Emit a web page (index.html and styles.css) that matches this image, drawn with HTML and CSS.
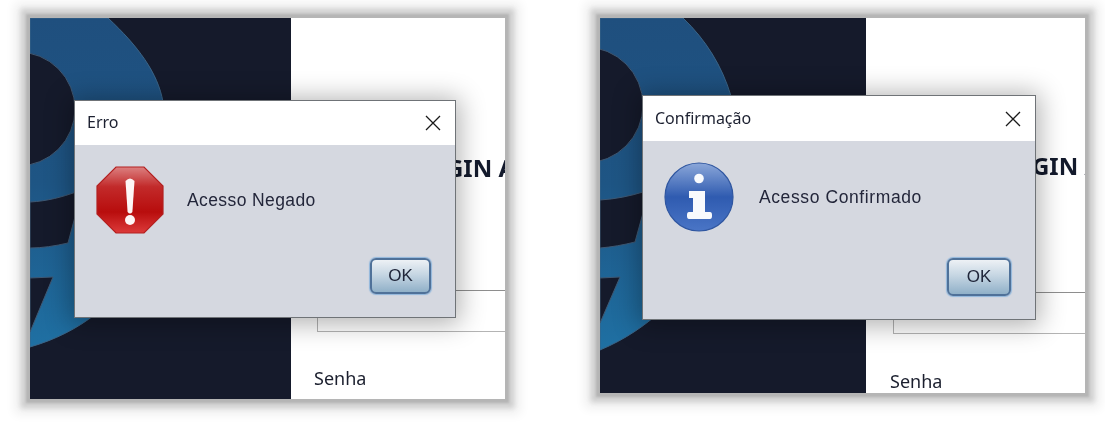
FILE: index.html
```html
<!DOCTYPE html>
<html lang="pt">
<head>
<meta charset="utf-8">
<title>Login</title>
<link rel="stylesheet" href="styles.css">
</head>
<body>
<main class="page">
  <section class="shot shot-a">
    <div class="brand">
      <svg class="logo" viewBox="0 0 261 381" aria-hidden="true">
        <defs>
          <linearGradient id="blueA" x1="0" y1="0" x2="0" y2="1">
            <stop offset="0" stop-color="#1f4f7e"/><stop offset="0.5" stop-color="#1e5584"/><stop offset="1" stop-color="#1f70a3"/>
          </linearGradient>
        </defs>
        <path class="ring" fill="url(#blueA)" d="M0 0H78C108 28 128 55 133 84C150 210 100 300 0 329Z"/>
        <circle class="cut" cx="-12" cy="91" r="57"/>
        <path class="cut" d="M0 184C18 183 32 179 46 174L46 195L38 225C25 228 12 230 0 230Z"/>
        <path class="cut" d="M0 260L23 259L0 314Z"/>
      </svg>
    </div>
    <div class="form">
      <h1 class="heading">LOGIN ACESSO</h1>
      <div class="field"></div>
      <p class="label">Senha</p>
    </div>
    <div class="dialog">
      <header class="bar"><span class="bar-title">Erro</span>
        <svg class="close" viewBox="0 0 16 16" aria-hidden="true"><path d="M1 1L15 15M15 1L1 15"/></svg>
      </header>
      <div class="body">
        <svg class="icon" viewBox="0 0 68 68" aria-hidden="true">
          <defs>
            <linearGradient id="red" x1="0" y1="0" x2="0" y2="1">
              <stop offset="0" stop-color="#dc8080"/><stop offset="0.3" stop-color="#c22a2a"/><stop offset="0.68" stop-color="#b80d0d"/><stop offset="1" stop-color="#dc3a3a"/>
            </linearGradient>
          </defs>
          <polygon fill="url(#red)" stroke="#b32020" stroke-width="1.2" points="20,1 48,1 67,20 67,48 48,67 20,67 1,48 1,20"/>
          <path fill="#fdf6f6" d="M29.5 15Q34 10 38.5 15L36.4 46Q34 49 31.6 46Z"/>
          <circle fill="#fdf6f6" cx="34" cy="54" r="5"/>
        </svg>
        <p class="message">Acesso Negado</p>
      </div>
      <footer class="foot"><button class="ok" type="button">OK</button></footer>
    </div>
  </section>

  <section class="shot shot-b">
    <div class="brand">
      <svg class="logo" viewBox="0 0 266 375" aria-hidden="true">
        <defs>
          <linearGradient id="blueB" x1="0" y1="0" x2="0" y2="1">
            <stop offset="0" stop-color="#1f4f7e"/><stop offset="0.5" stop-color="#1e5584"/><stop offset="1" stop-color="#1f70a3"/>
          </linearGradient>
        </defs>
        <path class="ring" fill="url(#blueB)" d="M0 0H83C106 22 122 48 131 78C150 180 100 290 0 332Z"/>
        <circle class="cut" cx="-15" cy="87" r="58"/>
        <path class="cut" d="M0 182C16 181 30 178 43 174L43 195L35 224C23 227 12 229 0 230Z"/>
        <path class="cut" d="M0 260L20 259L0 305Z"/>
      </svg>
    </div>
    <div class="form">
      <h1 class="heading">LOGIN ACESSO</h1>
      <div class="field"></div>
      <p class="label">Senha</p>
    </div>
    <div class="dialog">
      <header class="bar"><span class="bar-title">Confirmação</span>
        <svg class="close" viewBox="0 0 16 16" aria-hidden="true"><path d="M1 1L15 15M15 1L1 15"/></svg>
      </header>
      <div class="body">
        <svg class="icon" viewBox="0 0 70 70" aria-hidden="true">
          <defs>
            <linearGradient id="blueInfo" x1="0" y1="0" x2="0" y2="1">
              <stop offset="0" stop-color="#8ba7d9"/><stop offset="0.5" stop-color="#2f5bb0"/><stop offset="1" stop-color="#4a75c6"/>
            </linearGradient>
          </defs>
          <circle fill="url(#blueInfo)" stroke="#2f56a0" stroke-width="1.2" cx="35" cy="35" r="34"/>
          <circle fill="#f8fafd" cx="35" cy="16.5" r="4.8"/>
          <path fill="#f8fafd" d="M25 29H41V50H46Q48 50 48 53V54Q48 57 46 57H25Q23 57 23 54V53Q23 50 25 50H29V36H25Z"/>
        </svg>
        <p class="message">Acesso Confirmado</p>
      </div>
      <footer class="foot"><button class="ok" type="button">OK</button></footer>
    </div>
  </section>
</main>
</body>
</html>
```

FILE: styles.css
```css
* { box-sizing: border-box; }
html, body { margin: 0; padding: 0; background: #fff; }
body { width: 1105px; height: 441px; overflow: hidden; }

.page {
  display: flex;
  gap: 95px;
  padding: 18px 0 0 30px;
  font-family: "Noto Sans", "Open Sans", sans-serif;
}

.shot {
  position: relative;
  display: flex;
  box-shadow: 0 0 2px 4px #b5b5b5, 0 0 5px 9px #cfcfcf, 0 0 10px 15px #eeeeee;
  filter: blur(0.35px);
}
.shot-a { width: 475px; height: 381px; }
.shot-b { width: 485px; height: 375px; }

.brand { flex: none; background: #151a2b; }
.shot-a .brand { width: 261px; }
.shot-b .brand { width: 266px; }
.logo { display: block; width: 100%; height: 100%; }
.ring { stroke: #3a6487; stroke-width: 1; }
.cut { fill: #151a2b; stroke: #3f5873; stroke-width: 1; }

.form { flex: 1; min-width: 0; overflow: hidden; background: #fff; color: #1b1f2e; }
.heading { margin: 0; font: 700 24px/32px "Noto Sans", sans-serif; white-space: nowrap; color: #131a2c; }
.field { border: 1px solid #b4b4b4; border-top-color: #8e8e8e; border-right: 0; height: 42px; }
.label { margin: 0; font-size: 18px; line-height: 24px; }

.shot-a .form { padding-top: 134px; padding-left: 23px; }
.shot-a .heading { margin-left: 100px; }
.shot-a .field { margin: 106px 0 0 3px; }
.shot-a .label { margin-top: 34px; }

.shot-b .form { padding-top: 132px; padding-left: 24px; }
.shot-b .heading { margin-left: 110px; }
.shot-b .field { margin: 110px 0 0 3px; }
.shot-b .label { margin-top: 35px; }

.dialog {
  position: absolute;
  display: flex;
  flex-direction: column;
  background: #d5d8e0;
  border: 1px solid #6f7377;
  box-shadow: 0 2px 24px 4px rgba(0, 0, 0, .3);
}
.shot-a .dialog { left: 44px; top: 82px; width: 382px; height: 218px; }
.shot-b .dialog { left: 42px; top: 77px; width: 394px; height: 225px; }

.bar {
  display: flex;
  align-items: center;
  justify-content: space-between;
  flex: none;
  background: #fff;
  color: #1c2030;
  font-size: 16px;
}
.shot-a .bar { height: 44px; padding: 0 14px 0 12px; }
.shot-b .bar { height: 45px; padding: 0 14px 0 12px; }
.bar-title { position: relative; top: -1px; }
.close { width: 16px; height: 16px; }
.close path { fill: none; stroke: #1a1a1a; stroke-width: 1.3; }

.body { display: flex; align-items: center; padding: 21px 0 0 21px; }
.icon { flex: none; display: block; }
.shot-a .icon { width: 68px; height: 68px; margin-right: 23px; }
.shot-b .icon { width: 70px; height: 70px; margin-right: 25px; }
.message {
  margin: 0;
  font: 17.5px/20px "Liberation Sans", Arial, sans-serif;
  color: #23263a;
}
.shot-a .message { letter-spacing: .4px; }
.shot-b .message { letter-spacing: .6px; }

.foot { display: flex; justify-content: flex-end; margin-top: auto; padding: 0 24px 23px 0; }
.ok {
  border: 2px solid #4f7199;
  border-radius: 6px;
  background: linear-gradient(#edf1f5, #c6d6e3 45%, #90b0c8);
  box-shadow: 0 0 1px 1px #8fb6dc;
  color: #20263a;
  font: 17px/20px "Liberation Sans", Arial, sans-serif;
  padding: 0;
}
.shot-a .ok { width: 61px; height: 36px; }
.shot-b .ok { width: 64px; height: 38px; }
```
